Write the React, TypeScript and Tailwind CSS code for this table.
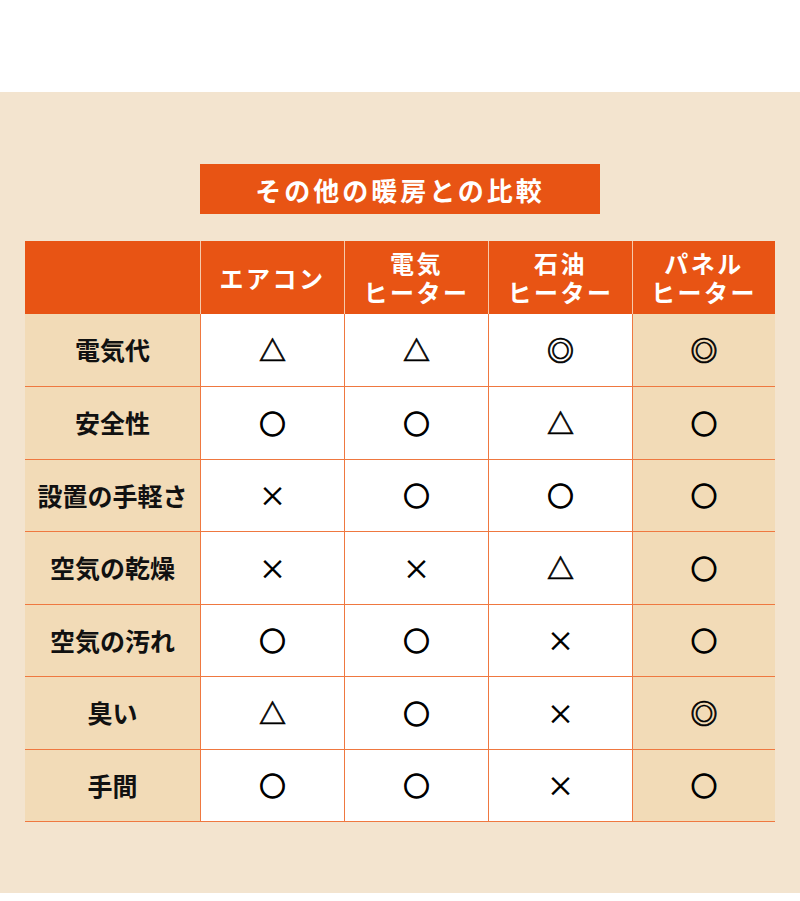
const heads = [
  ['エアコン'],
  ['電気', 'ヒーター'],
  ['石油', 'ヒーター'],
  ['パネル', 'ヒーター'],
];

const rows: [string, string[]][] = [
  ['電気代', ['△', '△', '◎', '◎']],
  ['安全性', ['○', '○', '△', '○']],
  ['設置の手軽さ', ['×', '○', '○', '○']],
  ['空気の乾燥', ['×', '×', '△', '○']],
  ['空気の汚れ', ['○', '○', '×', '○']],
  ['臭い', ['△', '○', '×', '◎']],
  ['手間', ['○', '○', '×', '○']],
];

function Mark({ v }: { v: string }) {
  if (v === '×')
    return <span className="text-[28px] leading-none font-medium text-black">{v}</span>;
  if (v === '△')
    return <span className="text-[27px] leading-none font-bold text-black [-webkit-text-stroke:0.6px_black]">{v}</span>;
  if (v === '◎')
    return <span className="text-[27px] leading-none font-bold text-black [-webkit-text-stroke:0.7px_black]">{v}</span>;
  return <span className="text-[26px] leading-none font-bold text-black [-webkit-text-stroke:1.4px_black]">{v}</span>;
}

export default function App() {
  return (
    <div className="w-[800px] bg-white pt-[92px] pb-[9px] font-['Noto_Sans_CJK_JP',sans-serif]">
      <div className="bg-[#f3e4cf] pt-[72px] pb-[71px]">
        <div className="mx-auto w-[400px] h-[50px] bg-[#e85414] flex items-center justify-center text-white text-[26px] font-semibold tracking-[3px]">
          その他の暖房との比較
        </div>

        <div className="mx-[25px] mt-[27px] grid grid-cols-[175px_144px_144px_144px_143px] auto-rows-[72.5px] border-b border-[#ef7840]">
          <div className="bg-[#e85414]" />
          {heads.map((h, i) => (
            <div
              key={i}
              className="bg-[#e85414] border-l border-[#f6c9aa] flex flex-col items-center justify-center text-white text-[24px] leading-[29px] font-semibold tracking-[2.5px]"
            >
              {h.map((t) => (
                <span key={t}>{t}</span>
              ))}
            </div>
          ))}

          {rows.map(([label, vals], r) => (
            <div key={label} className="contents">
              <div
                className={`bg-[#f2dbb7] flex items-center justify-center text-[25px] font-bold text-[#111] ${
                  r > 0 ? 'border-t border-[#ef7840]' : ''
                }`}
              >
                {label}
              </div>
              {vals.map((v, c) => (
                <div
                  key={c}
                  className={`border-l border-[#ef7840] flex items-center justify-center ${
                    r > 0 ? 'border-t' : ''
                  } ${c === 3 ? 'bg-[#f2dbb7]' : 'bg-white'}`}
                >
                  <Mark v={v} />
                </div>
              ))}
            </div>
          ))}
        </div>
      </div>
    </div>
  );
}
